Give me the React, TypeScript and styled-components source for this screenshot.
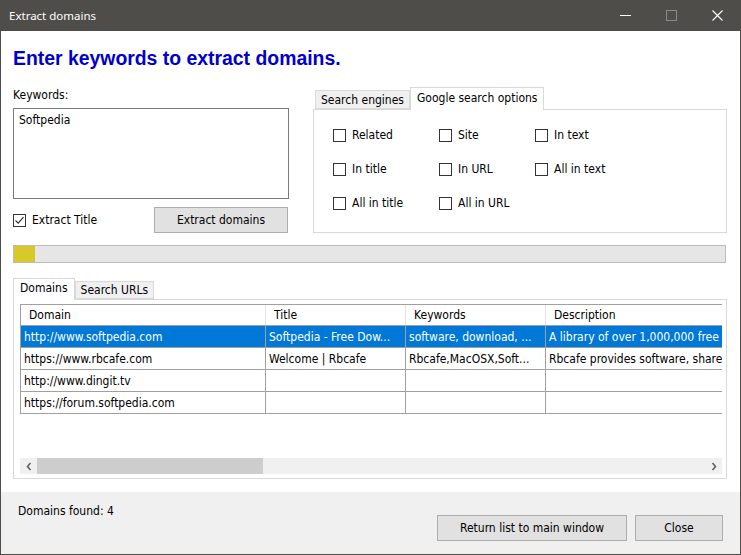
import { createGlobalStyle, styled } from 'styled-components';

const GlobalStyle = createGlobalStyle`
  html, body {
    margin: 0;
    padding: 0;
    background: #ffffff;
  }
  body {
    font-family: "DejaVu Sans Condensed", "DejaVu Sans", sans-serif;
    font-size: 12px;
    color: #000000;
  }
  * {
    box-sizing: border-box;
  }
`;

const options = [
  'Related', 'Site', 'In text',
  'In title', 'In URL', 'All in text',
  'All in title', 'All in URL',
];

const rows = [
  { domain: 'http://www.softpedia.com', title: 'Softpedia - Free Dow...', keywords: 'software, download, ...', description: 'A library of over 1,000,000 free and free-to-try software programs', selected: true },
  { domain: 'https://www.rbcafe.com', title: 'Welcome | Rbcafe', keywords: 'Rbcafe,MacOSX,Soft...', description: 'Rbcafe provides software, shareware and freeware' },
  { domain: 'http://www.dingit.tv', title: '', keywords: '', description: '' },
  { domain: 'https://forum.softpedia.com', title: '', keywords: '', description: '' },
];

const CheckMark = () => (
  <svg width="11" height="11" viewBox="0 0 11 11">
    <path d="M1.5 5.5 L4.2 8.2 L9.5 2.2" fill="none" stroke="#333333" strokeWidth="1.2" />
  </svg>
);

const Chevron = ({ dir }: { dir: 'left' | 'right' }) => (
  <svg width="6" height="9" viewBox="0 0 6 9">
    <path d={dir === 'left' ? 'M4.5 1 L1.5 4.5 L4.5 8' : 'M1.5 1 L4.5 4.5 L1.5 8'} fill="none" stroke="#606060" strokeWidth="1.6" />
  </svg>
);

const App = () => {
  return (
    <>
      <GlobalStyle />
      <S.Window>
        <S.TitleBar>
          <S.Caption>Extract domains</S.Caption>
          <S.Controls>
            <S.ControlBtn>
              <svg width="11" height="11" viewBox="0 0 11 11">
                <path d="M0 5.5 H11" stroke="#ffffff" strokeWidth="1" />
              </svg>
            </S.ControlBtn>
            <S.ControlBtn>
              <svg width="11" height="11" viewBox="0 0 11 11">
                <rect x="0.5" y="0.5" width="10" height="10" fill="none" stroke="#8c8b89" strokeWidth="1" />
              </svg>
            </S.ControlBtn>
            <S.ControlBtn>
              <svg width="11" height="11" viewBox="0 0 11 11">
                <path d="M0.5 0.5 L10.5 10.5 M10.5 0.5 L0.5 10.5" stroke="#ffffff" strokeWidth="1.1" />
              </svg>
            </S.ControlBtn>
          </S.Controls>
        </S.TitleBar>

        <S.Body>
          <S.Heading>Enter keywords to extract domains.</S.Heading>

          <S.TopSection>
            <S.LeftColumn>
              <S.Label>Keywords:</S.Label>
              <S.TextBox>Softpedia</S.TextBox>
              <S.ActionRow>
                <S.Option>
                  <S.CheckBox>
                    <CheckMark />
                  </S.CheckBox>
                  Extract Title
                </S.Option>
                <S.Button $width={134}>Extract domains</S.Button>
              </S.ActionRow>
            </S.LeftColumn>

            <S.TabGroup>
              <S.TabStrip $offset={2}>
                <S.Tab $tall={23} $short={19}>Search engines</S.Tab>
                <S.Tab $active $tall={23} $short={19}>Google search options</S.Tab>
              </S.TabStrip>
              <S.OptionsPanel>
                <S.OptionsGrid>
                  {options.map((o) => (
                    <S.Option key={o}>
                      <S.CheckBox />
                      {o}
                    </S.Option>
                  ))}
                </S.OptionsGrid>
              </S.OptionsPanel>
            </S.TabGroup>
          </S.TopSection>

          <S.Progress>
            <S.ProgressFill style={{ width: '3%' }} />
          </S.Progress>

          <S.ResultsTabs>
            <S.TabStrip $offset={0}>
              <S.Tab $active $tall={22} $short={18}>Domains</S.Tab>
              <S.Tab $tall={22} $short={18}>Search URLs</S.Tab>
            </S.TabStrip>
            <S.ResultsPanel>
              <S.Viewport>
                <S.HeaderRow>
                  <S.HeadCell>Domain</S.HeadCell>
                  <S.HeadCell>Title</S.HeadCell>
                  <S.HeadCell>Keywords</S.HeadCell>
                  <S.HeadCell>Description</S.HeadCell>
                </S.HeaderRow>
                {rows.map((r) => (
                  <S.Row key={r.domain} $selected={r.selected}>
                    <S.Cell>{r.domain}</S.Cell>
                    <S.Cell>{r.title}</S.Cell>
                    <S.Cell>{r.keywords}</S.Cell>
                    <S.Cell>{r.description}</S.Cell>
                  </S.Row>
                ))}
              </S.Viewport>
              <S.ScrollBar>
                <S.ScrollArrow>
                  <Chevron dir="left" />
                </S.ScrollArrow>
                <S.ScrollTrack>
                  <S.ScrollThumb />
                </S.ScrollTrack>
                <S.ScrollArrow>
                  <Chevron dir="right" />
                </S.ScrollArrow>
              </S.ScrollBar>
            </S.ResultsPanel>
          </S.ResultsTabs>
        </S.Body>

        <S.Footer>
          <S.Status>Domains found: 4</S.Status>
          <S.FooterButtons>
            <S.Button $width={190}>Return list to main window</S.Button>
            <S.Button $width={88}>Close</S.Button>
          </S.FooterButtons>
        </S.Footer>
      </S.Window>
    </>
  );
};

const S = {
  Window: styled.div`
    display: flex;
    flex-direction: column;

    width: 741px;
    height: 555px;

    border: 1px solid #4f4d4a;
    border-top: none;
    background: #ffffff;
  `,

  TitleBar: styled.header`
    display: flex;
    align-items: center;
    justify-content: space-between;

    height: 31px;
    padding-left: 8px;

    background: #4f4d4a;
  `,

  Caption: styled.span`
    color: #ffffff;
    font-family: "Noto Sans", "Open Sans", sans-serif;
    font-size: 11.5px;
  `,

  Controls: styled.div`
    display: flex;
    height: 100%;
  `,

  ControlBtn: styled.div`
    display: flex;
    align-items: center;
    justify-content: center;

    width: 46px;
    height: 100%;
  `,

  Body: styled.main`
    display: flex;
    flex-direction: column;
    flex: 1;

    padding: 0 13px 0 12px;
  `,

  Heading: styled.h1`
    margin: 15px 0 0;

    color: #0000cc;
    font-family: "Liberation Sans", Arial, sans-serif;
    font-size: 19.4px;
    font-weight: bold;
    line-height: 24px;
  `,

  TopSection: styled.section`
    display: grid;
    grid-template-columns: 276px 1fr;
    column-gap: 24px;

    margin-top: 17px;
  `,

  LeftColumn: styled.div`
    display: flex;
    flex-direction: column;
  `,

  Label: styled.div`
    height: 16px;
    margin-bottom: 5px;
    line-height: 16px;
  `,

  TextBox: styled.div`
    height: 91px;
    padding: 3px 5px;

    border: 1px solid #7a7a7a;
    background: #ffffff;
    line-height: 16px;
  `,

  ActionRow: styled.div`
    display: flex;
    align-items: center;
    justify-content: space-between;

    height: 26px;
    margin-top: 8px;
    padding-right: 1px;
  `,

  Option: styled.label`
    display: flex;
    align-items: center;
    gap: 6px;

    white-space: nowrap;
  `,

  CheckBox: styled.span`
    display: inline-flex;
    align-items: center;
    justify-content: center;
    flex-shrink: 0;

    width: 13px;
    height: 13px;

    border: 1px solid #333333;
    background: #ffffff;
  `,

  Button: styled.button<{ $width: number }>`
    width: ${({ $width }) => $width}px;
    height: 26px;
    padding: 0;

    border: 1px solid #adadad;
    background: #e1e1e1;
    color: #000000;
    font-family: inherit;
    font-size: 12px;
  `,

  TabGroup: styled.div`
    display: flex;
    flex-direction: column;
  `,

  TabStrip: styled.div<{ $offset: number }>`
    display: flex;
    align-items: flex-end;

    padding-left: ${({ $offset }) => $offset}px;
  `,

  Tab: styled.div<{ $active?: boolean; $tall: number; $short: number }>`
    position: relative;
    z-index: ${({ $active }) => ($active ? 2 : 1)};
    display: flex;
    align-items: center;

    height: ${({ $active, $tall, $short }) => ($active ? $tall : $short)}px;
    margin-bottom: ${({ $active }) => ($active ? -1 : 0)}px;
    padding: ${({ $active }) => ($active ? '0 6px 3px' : '0 5px 0')};

    border: 1px solid #d9d9d9;
    border-bottom: ${({ $active }) => ($active ? 'none' : '1px solid #d9d9d9')};
    background: ${({ $active }) => ($active ? '#ffffff' : '#f0f0f0')};
    white-space: nowrap;
  `,

  OptionsPanel: styled.div`
    height: 124px;

    border: 1px solid #d9d9d9;
    background: #ffffff;
  `,

  OptionsGrid: styled.div`
    display: grid;
    grid-template-columns: 106px 96px auto;
    grid-auto-rows: 34px;
    align-items: center;

    padding: 8px 0 0 19px;
  `,

  Progress: styled.div`
    height: 18px;
    margin: 12px 1px 0 0;

    border: 1px solid #bcbcbc;
    background: #e6e6e6;
  `,

  ProgressFill: styled.div`
    height: 100%;
    background: #d8c92a;
  `,

  ResultsTabs: styled.section`
    display: flex;
    flex-direction: column;

    margin-top: 15px;
  `,

  ResultsPanel: styled.div`
    display: flex;
    flex-direction: column;

    height: 180px;
    padding: 4px 4px 4px 6px;

    border: 1px solid #d9d9d9;
    background: #ffffff;
  `,

  Viewport: styled.div`
    height: 154px;
    overflow: hidden;
  `,

  HeaderRow: styled.div`
    display: grid;
    grid-template-columns: 245px 140px 140px 330px;
    width: max-content;
    height: 22px;

    border-top: 1px solid #a0a0a0;
    border-bottom: 1px solid #a0a0a0;
    border-left: 1px solid #a0a0a0;
  `,

  HeadCell: styled.div`
    display: flex;
    align-items: center;

    padding-left: 8px;

    border-right: 1px solid #e5e5e5;
    white-space: nowrap;
  `,

  Row: styled.div<{ $selected?: boolean }>`
    display: grid;
    grid-template-columns: 245px 140px 140px 330px;
    width: max-content;
    height: 22px;

    border-bottom: 1px solid #a0a0a0;
    border-left: 1px solid #a0a0a0;
    background: ${({ $selected }) => ($selected ? '#0078d7' : '#ffffff')};
    color: ${({ $selected }) => ($selected ? '#ffffff' : '#000000')};
  `,

  Cell: styled.div`
    display: flex;
    align-items: center;
    overflow: hidden;

    padding-left: 3px;

    border-right: 1px solid #a0a0a0;
    white-space: nowrap;
  `,

  ScrollBar: styled.div`
    display: flex;
    height: 16px;

    background: #f0f0f0;
  `,

  ScrollArrow: styled.div`
    display: flex;
    align-items: center;
    justify-content: center;

    width: 17px;
  `,

  ScrollTrack: styled.div`
    flex: 1;
  `,

  ScrollThumb: styled.div`
    width: 226px;
    height: 100%;
    background: #cdcdcd;
  `,

  Footer: styled.footer`
    display: flex;
    justify-content: space-between;

    height: 62px;
    padding: 11px 17px 13px 17px;

    background: #f0f0f0;
  `,

  Status: styled.div`
    line-height: 16px;
  `,

  FooterButtons: styled.div`
    display: flex;
    align-self: flex-end;
    gap: 8px;
  `,
};

export default App;
